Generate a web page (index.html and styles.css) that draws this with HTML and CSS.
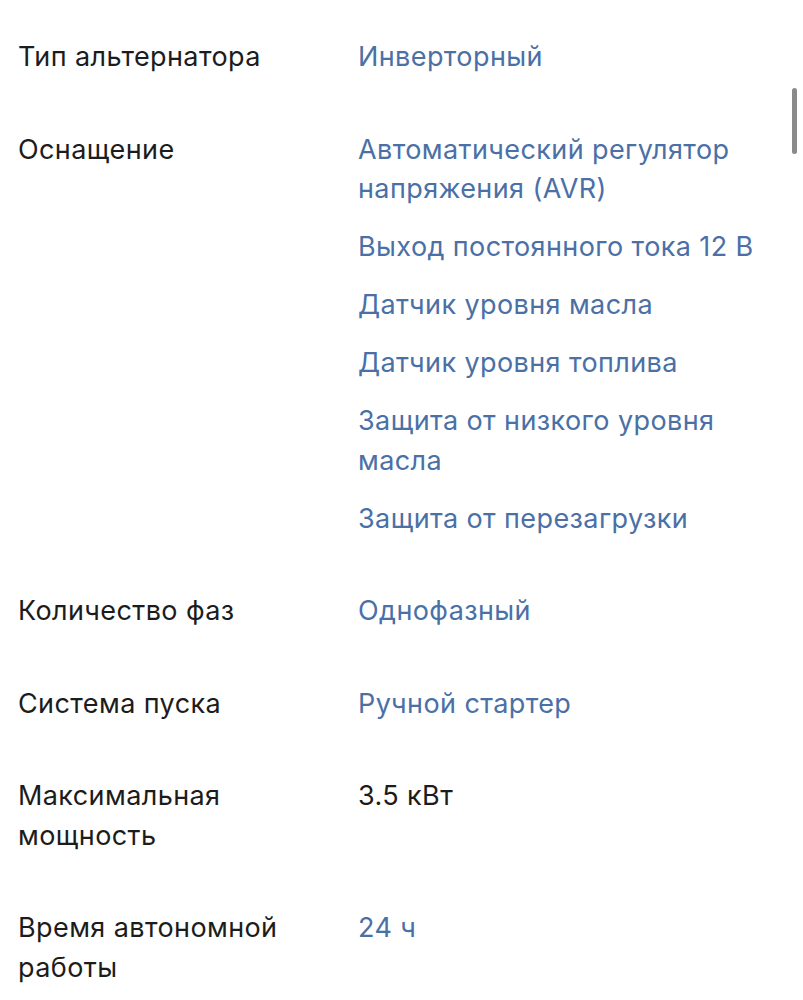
FILE: index.html
```html
<!DOCTYPE html>
<html lang="ru">
<head>
<meta charset="utf-8">
<link rel="stylesheet" href="styles.css">
</head>
<body>
<div class="specs">
  <div class="row">
    <div class="label">Тип альтернатора</div>
    <div class="values"><div class="val link">Инверторный</div></div>
  </div>
  <div class="row">
    <div class="label">Оснащение</div>
    <div class="values">
      <div class="val link">Автоматический регулятор напряжения (AVR)</div>
      <div class="val link">Выход постоянного тока 12 В</div>
      <div class="val link">Датчик уровня масла</div>
      <div class="val link">Датчик уровня топлива</div>
      <div class="val link">Защита от низкого уровня масла</div>
      <div class="val link">Защита от перезагрузки</div>
    </div>
  </div>
  <div class="row">
    <div class="label">Количество фаз</div>
    <div class="values"><div class="val link">Однофазный</div></div>
  </div>
  <div class="row">
    <div class="label">Система пуска</div>
    <div class="values"><div class="val link">Ручной стартер</div></div>
  </div>
  <div class="row">
    <div class="label">Максимальная мощность</div>
    <div class="values"><div class="val">3.5 кВт</div></div>
  </div>
  <div class="row">
    <div class="label">Время автономной работы</div>
    <div class="values"><div class="val link">24 ч</div></div>
  </div>
</div>
<div class="scrollbar"></div>
</body>
</html>
```

FILE: styles.css
```css
html, body {
  margin: 0;
  padding: 0;
  background: #ffffff;
}
body {
  font-family: Inter, "Noto Sans", sans-serif;
  font-size: 27px;
  letter-spacing: 0.4px;
  line-height: 39.5px;
  color: #1c1c1c;
}
.specs {
  display: flex;
  flex-direction: column;
  gap: 53px;
  padding: 37px 30px 0 18px;
}
.row {
  display: grid;
  grid-template-columns: 340px 1fr;
}
.label {
  padding-right: 40px;
}
.values {
  display: flex;
  flex-direction: column;
  gap: 18.5px;
}
.link {
  color: #4a70a6;
}
.scrollbar {
  position: fixed;
  right: 6px;
  top: 88px;
  width: 5px;
  height: 66px;
  border-radius: 3px;
  background: #8a8a8a;
}
```
